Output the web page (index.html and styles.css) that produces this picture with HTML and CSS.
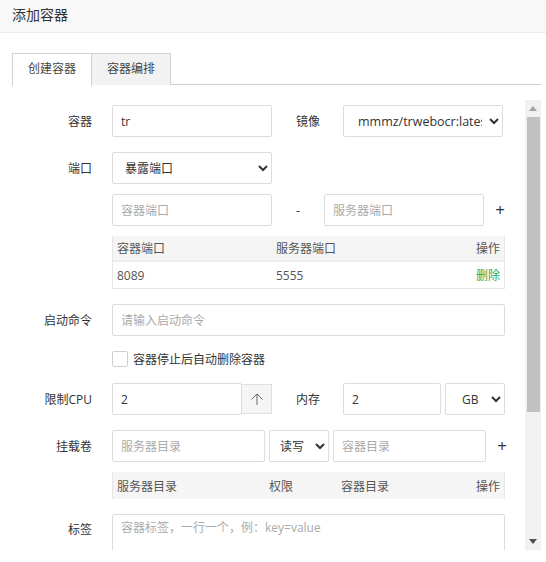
FILE: index.html
```html
<!DOCTYPE html>
<html lang="zh-CN">
<head>
<meta charset="utf-8">
<title>添加容器</title>
<link rel="stylesheet" href="styles.css">
</head>
<body>
<div class="header">添加容器</div>
<div class="tabs">
  <div class="tab active">创建容器</div>
  <div class="tab">容器编排</div>
</div>
<div class="panel">
  <div class="scroller">
    <div class="form">
      <div class="row">
        <div class="label">容器</div>
        <input class="input w160" type="text" value="tr">
        <div class="label2">镜像</div>
        <select class="select w160 img"><option>mmmz/trwebocr:latest</option></select>
      </div>
      <div class="row gap10">
        <div class="label">端口</div>
        <select class="select w160 pad"><option>暴露端口</option></select>
      </div>
      <div class="row gap10">
        <div class="label"></div>
        <input class="input w160" type="text" placeholder="容器端口">
        <div class="dash">-</div>
        <input class="input w160" type="text" placeholder="服务器端口">
        <div class="plus">+</div>
      </div>
      <div class="row">
        <div class="label"></div>
        <div class="table">
          <div class="tr th">
            <div class="td c1">容器端口</div>
            <div class="td c2">服务器端口</div>
            <div class="td op">操作</div>
          </div>
          <div class="tr">
            <div class="td c1">8089</div>
            <div class="td c2">5555</div>
            <div class="td op del">删除</div>
          </div>
        </div>
      </div>
      <div class="row">
        <div class="label">启动命令</div>
        <input class="input wfull" type="text" placeholder="请输入启动命令">
      </div>
      <div class="row check-row">
        <div class="label"></div>
        <span class="checkbox"></span>
        <span class="check-text">容器停止后自动删除容器</span>
      </div>
      <div class="row">
        <div class="label">限制CPU</div>
        <input class="input w130" type="text" value="2">
        <div class="stepper"><svg width="16" height="16" viewBox="0 0 16 16"><path d="M8 3V14M2.5 8.5L8 3L13.5 8.5" fill="none" stroke="#666" stroke-width="1"/></svg></div>
        <div class="label2">内存</div>
        <input class="input w98" type="text" value="2">
        <select class="select w60 unit"><option>GB</option></select>
      </div>
      <div class="row gap10">
        <div class="label">挂载卷</div>
        <input class="input w153" type="text" placeholder="服务器目录">
        <select class="select w60 mid"><option>读写</option></select>
        <input class="input w153" type="text" placeholder="容器目录">
        <div class="plus">+</div>
      </div>
      <div class="row">
        <div class="label"></div>
        <div class="table open">
          <div class="tr th">
            <div class="td m1">服务器目录</div>
            <div class="td m2">权限</div>
            <div class="td m3">容器目录</div>
            <div class="td op">操作</div>
          </div>
        </div>
      </div>
      <div class="row top">
        <div class="label lt">标签</div>
        <textarea class="textarea wfull" placeholder="容器标签，一行一个，例：key=value"></textarea>
      </div>
    </div>
  </div>
  <div class="vscroll">
    <div class="sb-btn"><svg width="8" height="5" viewBox="0 0 8 5"><path d="M0 5L4 0L8 5Z" fill="#a3a3a3"/></svg></div>
    <div class="sb-track"><div class="sb-thumb"></div></div>
    <div class="sb-btn"><svg width="8" height="5" viewBox="0 0 8 5"><path d="M0 0L8 0L4 5Z" fill="#505050"/></svg></div>
  </div>
</div>
</body>
</html>
```
FILE: styles.css
```css
* { box-sizing: border-box; }
html, body {
  margin: 0;
  padding: 0;
  background: #fff;
  font-family: "Open Sans", "Noto Sans CJK SC", sans-serif;
  font-size: 12px;
  color: #333;
}
.header {
  height: 33px;
  background: #f8f8f8;
  border-bottom: 1px solid #eee;
  padding-left: 12px;
  font-size: 14px;
  line-height: 30px;
  color: #333;
}
.tabs {
  display: flex;
  margin: 20px 5px 0 12px;
  height: 32px;
  border-bottom: 1px solid #d3d0de;
}
.tab {
  width: 80px;
  height: 32px;
  border: 1px solid #d3d0de;
  border-bottom: none;
  background: #f2f2f2;
  text-align: center;
  line-height: 30px;
  color: #444;
  margin-right: -1px;
}
.tab.active {
  background: #fff;
  height: 33px;
}
.panel {
  display: flex;
  margin: 15px 5px 0 12px;
  height: 450px;
}
.scroller {
  flex: 1;
  overflow: hidden;
}
.vscroll {
  width: 16px;
  flex: none;
  background: #f1f1f1;
  display: flex;
  flex-direction: column;
}
.sb-btn {
  height: 17px;
  display: flex;
  align-items: center;
  justify-content: center;
  flex: none;
}
.sb-track {
  flex: 1;
  padding: 0 1px 0 2px;
}
.sb-thumb {
  height: 295px;
  background: #c1c1c1;
}
.form {
  padding: 5px 0 106px 0;
}
.row {
  display: flex;
  align-items: center;
  margin-bottom: 15px;
}
.row.gap10 { margin-bottom: 10px; }
.row.top { align-items: flex-start; }
.label {
  width: 80px;
  margin-right: 20px;
  flex: none;
  text-align: right;
  color: #333;
}
.label.lt { padding-top: 6px; }
.label2 {
  width: 48px;
  margin-right: 23px;
  flex: none;
  text-align: right;
  color: #333;
}
.input, .select, .textarea {
  height: 32px;
  border: 1px solid #dcdcdc;
  border-radius: 2px;
  background: #fff;
  font-family: "Open Sans", "Noto Sans CJK SC", sans-serif;
  font-size: 12px;
  color: #333;
  flex: none;
  outline: none;
}
.input { padding: 0 8px; }
.input::placeholder, .textarea::placeholder { color: #aaa; }
.select { padding: 0 4px 0 5px; color: #333; }
.select.img { padding-left: 10px; font-size: 12.5px; }
.select.pad { padding-left: 8px; }
.select.unit { margin-left: 4px; padding-left: 12px; }
.select.mid { margin: 0 4px 0 4px; padding-left: 6px; }
.w160 { width: 160px; }
.w130 { width: 130px; }
.w98 { width: 98px; }
.w60 { width: 60px; }
.w153 { width: 153px; }
.wfull { width: 393px; }
.dash {
  width: 52px;
  text-align: center;
  flex: none;
  color: #333;
}
.plus {
  width: 32px;
  text-align: center;
  font-size: 17px;
  color: #333;
  flex: none;
  line-height: 20px;
}
.table {
  width: 393px;
  border: 1px solid #e6e6e6;
  border-top: none;
  flex: none;
}
.table.open { border-bottom: none; }
.tr {
  display: flex;
  height: 26px;
  align-items: center;
  border-bottom: 1px solid #e6e6e6;
  color: #555;
}
.tr:last-child { border-bottom: none; }
.tr.th {
  background: #f5f5f5;
  height: 26px;
  border-bottom: 2px solid #eee;
}
.table.open .tr.th { border-bottom: none; height: 27px; }
.td { padding-left: 4px; flex: none; }
.c1 { width: 159px; }
.c2 { width: 150px; }
.m1 { width: 152px; }
.m2 { width: 72px; }
.m3 { width: 100px; }
.op {
  flex: 1;
  text-align: right;
  padding-right: 4px;
}
.del { color: #2ea84e; }
.check-row { height: 16px; margin-top: 0; margin-bottom: 16px; }
.checkbox {
  width: 16px;
  height: 16px;
  border: 1px solid #cfcfcf;
  border-radius: 2px;
  margin-right: 5px;
  flex: none;
}
.check-text { color: #333; }
.stepper {
  width: 30px;
  height: 30px;
  border: 1px solid #e0e0e0;
  border-left: none;
  background: #f5f5f5;
  display: flex;
  align-items: center;
  justify-content: center;
  flex: none;
}
.textarea {
  height: 100px;
  padding: 4px 8px;
  resize: none;
  line-height: 18px;
}
```
